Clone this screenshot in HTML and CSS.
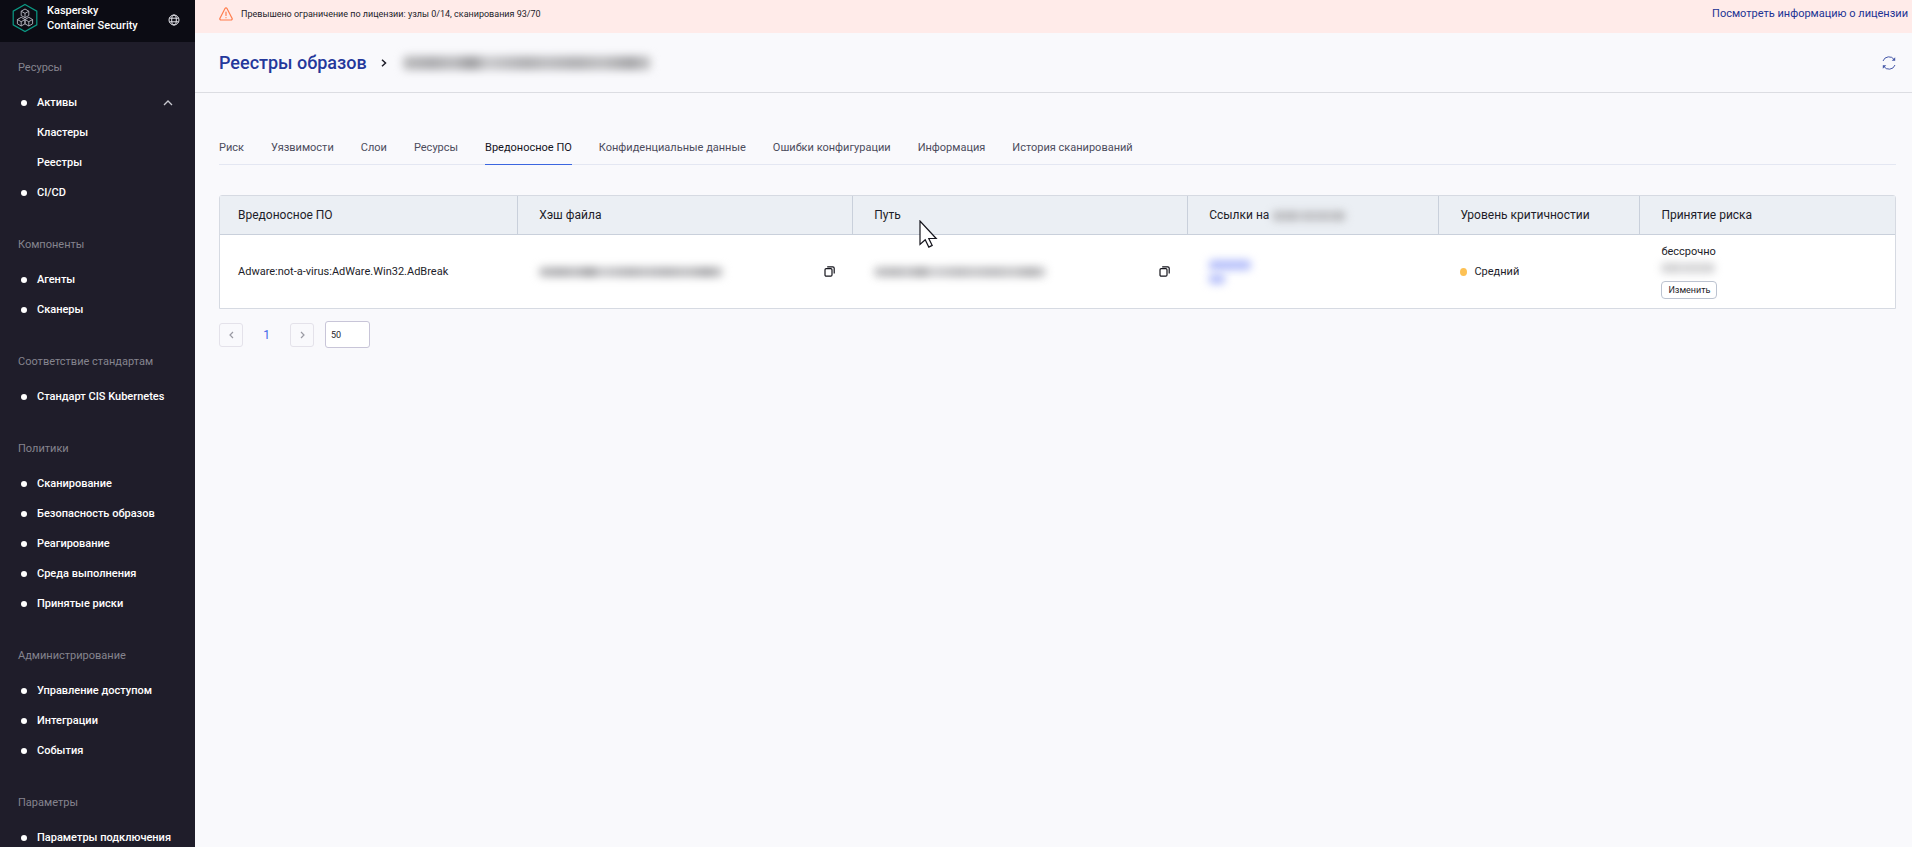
FILE: index.html
```html
<!doctype html>
<html lang="ru">
  <head>
    <meta charset="UTF-8" />
    <meta name="viewport" content="width=device-width, initial-scale=1.0" />
    <title>Kaspersky Container Security</title>
    <link rel="stylesheet" href="styles.css">
  </head>
  <body>
    <div class="layout">
      <!-- Sidebar -->
      <aside class="sidebar">
        <div class="brand">
          <svg class="brand-logo" width="26" height="30" viewBox="0 0 26 30" fill="none">
            <path d="M13 1.5 24.8 8.2v13.6L13 28.5 1.2 21.8V8.2z" stroke="#0b9a85" stroke-width="1.2"/>
            <g stroke="#b9bac4" stroke-width="0.9" stroke-linejoin="round">
              <path d="M13 6l3.8 2.2v4.3L13 14.7l-3.8-2.2V8.2zM9.2 8.2l3.8 2.2 3.8-2.2M13 10.4v4.3"/>
              <path d="M9.2 14.3L13 16.5v4.3L9.2 23l-3.8-2.2v-4.3zM5.4 16.5l3.8 2.2 3.8-2.2M9.2 18.7V23"/>
              <path d="M16.8 14.3l3.8 2.2v4.3L16.8 23 13 20.8v-4.3zM13 16.5l3.8 2.2 3.8-2.2M16.8 18.7V23"/>
            </g>
          </svg>
          <div class="brand-name">Kaspersky<br>Container Security</div>
          <button class="lang-button" aria-label="Язык">
            <svg width="12" height="12" viewBox="0 0 12 12" fill="none" stroke="#e4e4ea">
              <circle cx="6" cy="6" r="5"/>
              <ellipse cx="6" cy="6" rx="2.3" ry="5"/>
              <path d="M1.5 4.2h9M1.5 7.8h9"/>
            </svg>
          </button>
        </div>

        <nav class="menu">
          <div class="menu-group">
            <div class="menu-title">Ресурсы</div>
            <a class="menu-item" href="#">Активы
              <svg class="menu-arrow" width="10" height="6" viewBox="0 0 10 6" fill="none" stroke="#c9c9d0" stroke-width="1.3"><path d="M1 5l4-4 4 4"/></svg>
            </a>
            <a class="menu-item sub" href="#">Кластеры</a>
            <a class="menu-item sub" href="#">Реестры</a>
            <a class="menu-item" href="#">CI/CD</a>
          </div>
          <div class="menu-group">
            <div class="menu-title">Компоненты</div>
            <a class="menu-item" href="#">Агенты</a>
            <a class="menu-item" href="#">Сканеры</a>
          </div>
          <div class="menu-group">
            <div class="menu-title">Соответствие стандартам</div>
            <a class="menu-item" href="#">Стандарт CIS Kubernetes</a>
          </div>
          <div class="menu-group">
            <div class="menu-title">Политики</div>
            <a class="menu-item" href="#">Сканирование</a>
            <a class="menu-item" href="#">Безопасность образов</a>
            <a class="menu-item" href="#">Реагирование</a>
            <a class="menu-item" href="#">Среда выполнения</a>
            <a class="menu-item" href="#">Принятые риски</a>
          </div>
          <div class="menu-group">
            <div class="menu-title">Администрирование</div>
            <a class="menu-item" href="#">Управление доступом</a>
            <a class="menu-item" href="#">Интеграции</a>
            <a class="menu-item" href="#">События</a>
          </div>
          <div class="menu-group">
            <div class="menu-title">Параметры</div>
            <a class="menu-item" href="#">Параметры подключения</a>
          </div>
        </nav>
      </aside>

      <main class="main">
        <!-- License warning -->
        <div class="banner">
          <svg width="14" height="14" viewBox="0 0 14 14" fill="none" stroke="#ff7d4d" stroke-width="1.2" stroke-linecap="round" stroke-linejoin="round">
            <path d="M6 1.5a1.150 1.150 0 0 1 2 0l5 9.7a1.150 1.150 0 0 1-1 1.8H2a1.150 1.150 0 0 1-1-1.8z"/>
            <path d="M7 5v3.5M7 10.5v.2"/>
          </svg>
          <span class="banner-text">Превышено ограничение по лицензии: узлы 0/14, сканирования 93/70</span>
          <a class="banner-link" href="#">Посмотреть информацию о лицензии</a>
        </div>

        <header class="page-header">
          <a class="page-title" href="#">Реестры образов</a>
          <svg width="6" height="8" viewBox="0 0 6 8" fill="none" stroke="#1d1d29" stroke-width="1.5"><path d="M1 .8L4.500 4 1 7.200"/></svg>
          <span class="redacted redacted-title"></span>
          <button class="refresh-button" aria-label="Обновить">
            <svg width="14" height="14" viewBox="0 0 14 14" fill="none" stroke="#4658a8">
              <path d="M1 5A6.300 6.300 0 0 1 12.300 3.800M13 9A6.300 6.300 0 0 1 1.700 10.200"/>
              <path d="M13.200 1.300v3.500H9.700zM.8 12.700V9.200h3.500z" fill="#4658a8" stroke="none"/>
            </svg>
          </button>
        </header>

        <div class="content">
          <nav class="tabs">
            <a class="tab" href="#">Риск</a>
            <a class="tab" href="#">Уязвимости</a>
            <a class="tab" href="#">Слои</a>
            <a class="tab" href="#">Ресурсы</a>
            <a class="tab active" href="#">Вредоносное ПО</a>
            <a class="tab" href="#">Конфиденциальные данные</a>
            <a class="tab" href="#">Ошибки конфигурации</a>
            <a class="tab" href="#">Информация</a>
            <a class="tab" href="#">История сканирований</a>
          </nav>

          <table class="table">
            <thead>
              <tr>
                <th class="col-malware">Вредоносное ПО</th>
                <th class="col-hash">Хэш файла</th>
                <th class="col-path">Путь</th>
                <th class="col-links">Ссылки на <span class="redacted redacted-head"></span></th>
                <th class="col-level">Уровень критичностии</th>
                <th class="col-risk">Принятие риска</th>
              </tr>
            </thead>
            <tbody>
              <tr>
                <td>Adware:not-a-virus:AdWare.Win32.AdBreak</td>
                <td>
                  <div class="copy-cell">
                    <span class="redacted redacted-hash"></span>
                    <button class="copy-button" aria-label="Копировать">
                      <svg width="11" height="11" viewBox="0 0 11 11" fill="none" stroke="#14141c" stroke-width="1.2"><rect x="1" y="2.6" width="7" height="7.6" rx="1.2"/><path d="M3.200.8h5.600a1.400 1.400 0 0 1 1.400 1.400v5.300"/></svg>
                    </button>
                  </div>
                </td>
                <td>
                  <div class="copy-cell">
                    <span class="redacted redacted-path"></span>
                    <button class="copy-button" aria-label="Копировать">
                      <svg width="11" height="11" viewBox="0 0 11 11" fill="none" stroke="#14141c" stroke-width="1.2"><rect x="1" y="2.6" width="7" height="7.6" rx="1.2"/><path d="M3.200.8h5.600a1.400 1.400 0 0 1 1.400 1.400v5.300"/></svg>
                    </button>
                  </div>
                </td>
                <td>
                  <a class="redacted-link" href="#" aria-label="Ссылка">
                    <span class="redacted redacted-link-long"></span>
                    <span class="redacted redacted-link-short"></span>
                  </a>
                </td>
                <td><span class="level">Средний</span></td>
                <td>
                  <div class="risk">
                    <span>бессрочно</span>
                    <span class="redacted redacted-date"></span>
                    <button class="edit-button">Изменить</button>
                  </div>
                </td>
              </tr>
            </tbody>
          </table>

          <div class="pagination">
            <button class="page-button" aria-label="Назад">
              <svg width="5" height="8" viewBox="0 0 5 8" fill="none" stroke="#9a9aa3" stroke-width="1.2"><path d="M4 1L1 4l3 3"/></svg>
            </button>
            <button class="page-number">1</button>
            <button class="page-button" aria-label="Вперёд">
              <svg width="5" height="8" viewBox="0 0 5 8" fill="none" stroke="#9a9aa3" stroke-width="1.2"><path d="M1 1l3 3-3 3"/></svg>
            </button>
            <select class="page-size" aria-label="Строк на странице">
              <option>50</option>
            </select>
          </div>
        </div>
      </main>
    </div>

    <svg class="cursor" width="19" height="28" viewBox="0 0 19 28" fill="#fff" stroke="#14141c" stroke-width="1.2">
      <path d="M1 1v23.500l5.200-4.700 3.600 7.300 3.400-1.700-3.400-6.900h7.400z"/>
    </svg>
  </body>
</html>
```
FILE: styles.css
```css
* {
  margin: 0;
  padding: 0;
  box-sizing: border-box;
}

body {
  font-family: Roboto, 'Liberation Sans', sans-serif;
  font-size: 11px;
  line-height: 16px;
  color: #1d1d29;
  background: #f9f9fc;
}

a {
  color: inherit;
  text-decoration: none;
}

button {
  font-family: inherit;
  color: inherit;
  background: none;
  border: none;
  cursor: pointer;
}

svg {
  display: block;
  flex-shrink: 0;
}

.layout {
  display: flex;
  height: 100vh;
  overflow: hidden;
}

/* Sidebar */
.sidebar {
  width: 195px;
  flex-shrink: 0;
  background: #1f1d2a;
  color: #fff;
  overflow: hidden;
}

.brand {
  display: flex;
  align-items: center;
  height: 42px;
  padding: 0 15px 6px 12px;
  background: #0c0c14;
}

.brand-name {
  flex: 1;
  margin-left: 9px;
  line-height: 15px;
  font-weight: 500;
}

.lang-button {
  margin-top: 4px;
}

.menu {
  padding-top: 6px;
}

.menu-group {
  margin-bottom: 17px;
}

.menu-title {
  padding-left: 18px;
  line-height: 40px;
  color: #85848e;
}

.menu-item {
  display: flex;
  align-items: center;
  height: 30px;
  padding: 0 22px 0 21px;
  font-weight: 500;
  white-space: nowrap;
}

.menu-item::before {
  content: '';
  flex-shrink: 0;
  width: 6px;
  height: 6px;
  margin-right: 10px;
  border-radius: 50%;
  background: #fff;
}

.menu-item.sub::before {
  background: none;
}

.menu-arrow {
  margin-left: auto;
}

/* License warning */
.main {
  flex: 1;
  min-width: 0;
}

.banner {
  display: flex;
  align-items: center;
  height: 33px;
  padding: 0 4px 6px 24px;
  background: #ffebe9;
}

.banner-text {
  flex: 1;
  margin-left: 8px;
  font-size: 9px;
}

.banner-link {
  color: #213394;
}

/* Page header */
.page-header {
  display: flex;
  align-items: center;
  height: 60px;
  padding: 0 16px 0 24px;
  border-bottom: 1px solid #dcdde2;
}

.page-title {
  margin-right: 14px;
  font-size: 18px;
  line-height: 24px;
  font-weight: 500;
  color: #24389b;
}

.refresh-button {
  margin-left: auto;
}

/* Tabs */
.content {
  padding: 36px 16px 0 24px;
}

.tabs {
  display: flex;
  gap: 27px;
  border-bottom: 1px solid #e4e7f2;
}

.tab {
  margin-bottom: -1px;
  padding: 11px 0 8px;
  border-bottom: 1px solid transparent;
  color: #4c4c5c;
}

.tab.active {
  color: #14141c;
  border-bottom-color: #3b66e0;
}

/* Table */
.table {
  width: 100%;
  margin-top: 30px;
  table-layout: fixed;
  border: 1px solid #d6dae2;
  border-radius: 3px 3px 0 0;
  border-spacing: 0;
  background: #fff;
}

.table th {
  height: 39px;
  padding-left: 21px;
  font-size: 12px;
  font-weight: 400;
  text-align: left;
  background: #ebeff4;
  border-bottom: 1px solid #c9d0db;
  border-right: 1px solid #c9d0db;
}

.table th:last-child {
  border-right: none;
}

.table td {
  height: 73px;
  padding-left: 21px;
}

.table th:first-child,
.table td:first-child {
  padding-left: 18px;
}

.col-malware {
  width: 17.8%;
}

.col-hash,
.col-path {
  width: 20%;
}

.col-links {
  width: 15%;
}

.col-level {
  width: 12%;
}

.copy-cell {
  display: flex;
  align-items: center;
  justify-content: space-between;
  padding-right: 18px;
}

.level {
  display: flex;
  align-items: center;
}

.level::before {
  content: '';
  width: 7px;
  height: 8px;
  margin-right: 7px;
  border-radius: 50%;
  background: #fdc154;
}

.risk {
  display: flex;
  flex-direction: column;
  align-items: flex-start;
}

.edit-button {
  height: 18px;
  margin-top: 8px;
  padding: 0 6px;
  font-size: 9px;
  background: #fff;
  border: 1px solid #bcc3d0;
  border-radius: 4px;
}

/* Hidden values */
.redacted {
  display: inline-block;
  height: 10px;
  border-radius: 4px;
  background: linear-gradient(90deg, #bcbcbe, #acacaf 12%, #bcbcbf 20%, #9c9c9f 28%, #cacacd 34%, #b0b0b3 50%, #bebec1 58%, #b0b0b3 70%, #c0c0c2 80%, #a4a4a7 92%, #cbcbcd);
  filter: blur(4px);
}

.redacted-title {
  width: 248px;
  height: 14px;
  margin-left: 16px;
}

.redacted-head {
  width: 74px;
  vertical-align: middle;
  opacity: 0.8;
}

.redacted-hash {
  width: 184px;
}

.redacted-path {
  width: 172px;
  opacity: 0.9;
}

.redacted-link {
  display: flex;
  flex-direction: column;
  gap: 4px;
}

.redacted-link .redacted {
  background: #b4befa;
}

.redacted-link-long {
  width: 42px;
}

.redacted-link-short {
  width: 16px;
}

.redacted-date {
  width: 54px;
  margin-top: 3px;
  opacity: 0.6;
}

/* Pagination */
.pagination {
  display: flex;
  align-items: center;
  margin-top: 12px;
}

.page-button {
  display: flex;
  align-items: center;
  justify-content: center;
  width: 24px;
  height: 24px;
  border: 1px solid #e4e2ea;
  border-radius: 3px;
}

.page-number {
  width: 47px;
  font-size: 12px;
  color: #4267e8;
}

.page-size {
  appearance: none;
  width: 45px;
  height: 27px;
  margin-left: 11px;
  padding-left: 5px;
  font-family: inherit;
  font-size: 9px;
  color: inherit;
  background: #fff;
  border: 1px solid #c8c5d8;
  border-radius: 3px;
}

/* Mouse pointer */
.cursor {
  position: absolute;
  left: 919px;
  top: 220px;
}
```
